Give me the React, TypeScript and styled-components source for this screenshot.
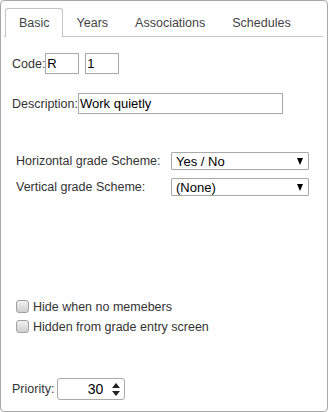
import React from "react";
import styled, { createGlobalStyle } from "styled-components";

const GlobalStyle = createGlobalStyle`
  html, body {
    margin: 0;
    padding: 0;
    background: #fff;
  }
  body {
    font-family: "Liberation Sans", Arial, sans-serif;
    font-size: 12.5px;
    color: #333;
  }
`;

const Panel = styled.div`
  box-sizing: border-box;
  width: 328px;
  height: 412px;
  border: 1px solid #a8a8a8;
  border-radius: 4px;
  padding: 7px 4px 0 3px;
  display: flex;
  flex-direction: column;
`;

const TabBar = styled.div`
  display: flex;
  padding-left: 1px;
  border-bottom: 1px solid #c5c5c5;
  height: 28px;
`;

const Tab = styled.div<{ $active?: boolean }>`
  box-sizing: border-box;
  height: ${(p) => (p.$active ? "29px" : "28px")};
  padding: 0 12px 0 13px;
  display: flex;
  align-items: center;
  color: #444;
  background: #fff;
  border: 1px solid ${(p) => (p.$active ? "#c5c5c5" : "transparent")};
  border-bottom: none;
  border-radius: 3px 3px 0 0;
`;

const Body = styled.div`
  display: flex;
  flex-direction: column;
  padding: 0 0 0 8px;
`;

const Row = styled.div<{ $top: number; $indent?: number }>`
  display: flex;
  align-items: center;
  margin-top: ${(p) => p.$top}px;
  padding-left: ${(p) => p.$indent ?? 0}px;
`;

const Label = styled.span<{ $width?: number }>`
  color: #333;
  width: ${(p) => (p.$width ? `${p.$width}px` : "auto")};
  flex-shrink: 0;
`;

const TextBox = styled.div<{ $width: number; $gap?: number }>`
  box-sizing: border-box;
  width: ${(p) => p.$width}px;
  height: 21px;
  margin-left: ${(p) => p.$gap ?? 0}px;
  border: 1px solid #a9a9a9;
  padding: 0 1px;
  display: flex;
  align-items: center;
  color: #000;
  background: #fff;
  font-size: 13px;
`;

const SelectBox = styled.div`
  box-sizing: border-box;
  width: 138px;
  height: 18px;
  border: 1px solid #a9a9a9;
  border-radius: 1px;
  padding: 0 5px 0 4px;
  display: flex;
  align-items: center;
  justify-content: space-between;
  color: #000;
  background: #fff;
  font-size: 13px;
`;

const Caret = styled.span`
  width: 0;
  height: 0;
  border-left: 3.5px solid transparent;
  border-right: 3.5px solid transparent;
  border-top: 7px solid #000;
  margin-top: 1px;
`;

const CheckRow = styled.label<{ $top: number }>`
  display: flex;
  align-items: center;
  gap: 4px;
  margin-top: ${(p) => p.$top}px;
  padding-left: 4px;
  height: 20px;
  color: #333;
`;

const Check = styled.span`
  box-sizing: border-box;
  width: 13px;
  height: 13px;
  border: 1px solid #a0a0a0;
  border-radius: 3px;
  background: linear-gradient(#f0f0f0, #cfcfcf);
  margin-top: -1px;
`;

const Spinner = styled.div`
  box-sizing: border-box;
  width: 68px;
  height: 22px;
  margin-left: 3px;
  border: 1px solid #a9a9a9;
  border-radius: 3px;
  display: flex;
  align-items: center;
  background: #fff;
`;

const SpinValue = styled.span`
  flex: 1;
  text-align: right;
  padding-right: 5px;
  color: #000;
  font-size: 14px;
`;

const SpinArrows = styled.div`
  width: 16px;
  display: flex;
  flex-direction: column;
  align-items: center;
  gap: 3px;
`;

const Arrow = styled.span<{ $up?: boolean }>`
  width: 0;
  height: 0;
  border-left: 4px solid transparent;
  border-right: 4px solid transparent;
  ${(p) =>
    p.$up ? "border-bottom: 5px solid #222;" : "border-top: 5px solid #222;"}
`;

const tabs = ["Basic", "Years", "Associations", "Schedules"];

export default function App() {
  return (
    <>
      <GlobalStyle />
      <Panel>
        <TabBar>
          {tabs.map((t, i) => (
            <Tab key={t} $active={i === 0}>
              {t}
            </Tab>
          ))}
        </TabBar>
        <Body>
          <Row $top={16}>
            <Label>Code:</Label>
            <TextBox $width={34}>R</TextBox>
            <TextBox $width={34} $gap={6}>
              1
            </TextBox>
          </Row>
          <Row $top={19}>
            <Label>Description:</Label>
            <TextBox $width={205}>Work quietly</TextBox>
          </Row>
          <Row $top={38} $indent={4}>
            <Label $width={155}>Horizontal grade Scheme:</Label>
            <SelectBox>
              Yes / No
              <Caret />
            </SelectBox>
          </Row>
          <Row $top={8} $indent={4}>
            <Label $width={155}>Vertical grade Scheme:</Label>
            <SelectBox>
              (None)
              <Caret />
            </SelectBox>
          </Row>
          <CheckRow $top={101}>
            <Check />
            Hide when no memebers
          </CheckRow>
          <CheckRow $top={0}>
            <Check />
            Hidden from grade entry screen
          </CheckRow>
          <Row $top={41}>
            <Label>Priority:</Label>
            <Spinner>
              <SpinValue>30</SpinValue>
              <SpinArrows>
                <Arrow $up />
                <Arrow />
              </SpinArrows>
            </Spinner>
          </Row>
        </Body>
      </Panel>
    </>
  );
}
